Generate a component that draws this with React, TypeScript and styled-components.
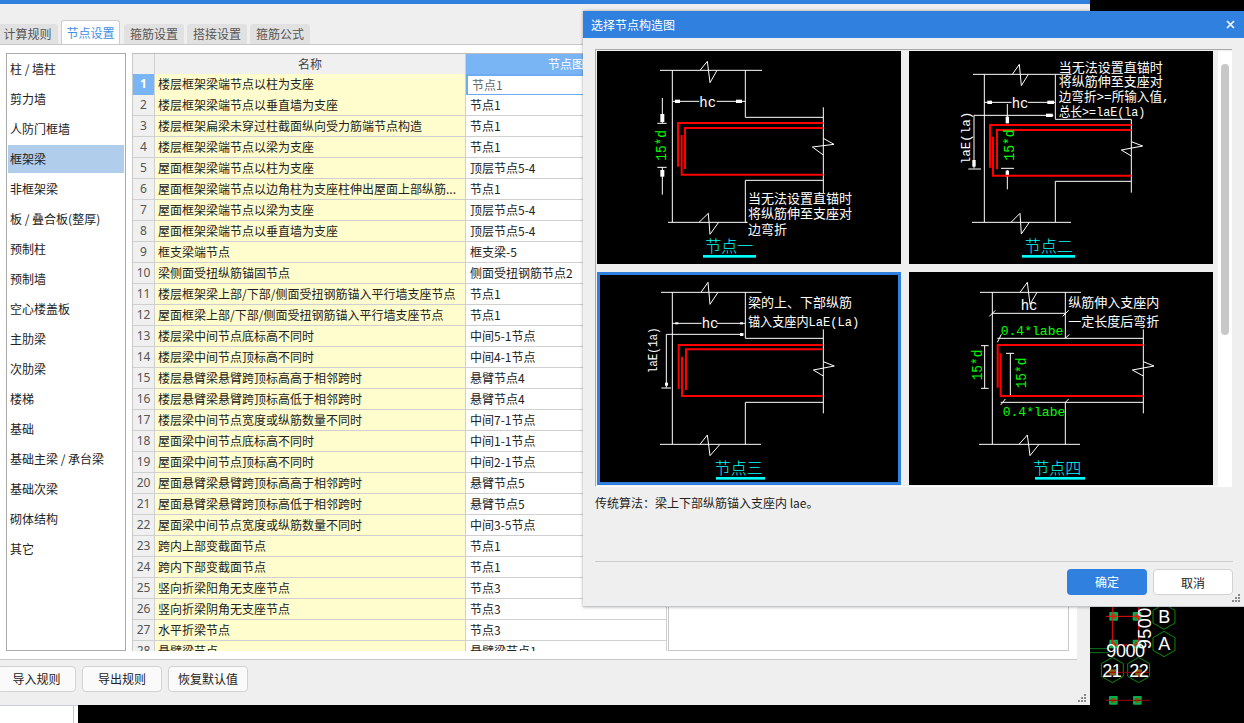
import React from "react";
import styled, { createGlobalStyle } from "styled-components";

const Global = createGlobalStyle`
  html, body { margin: 0; padding: 0; background: #000; overflow: hidden; }
  * { box-sizing: border-box; }
  body { font-family: "Noto Sans CJK SC", "Noto Sans", sans-serif; font-size: 12px; color: #222; }
`;

const Desktop = styled.div`
  position: relative;
  width: 1244px;
  height: 723px;
  background: #000;
  overflow: hidden;
`;

const AppWindow = styled.div`
  width: 1090px;
  height: 705px;
  display: flex;
  flex-direction: column;
  background: #efefef;
  border-top: 4px solid #2f80df;
  padding-top: 16px;
  position: relative;
`;

const TabBar = styled.div`
  display: flex;
  align-items: flex-end;
  height: 24px;
  margin-left: -3px;
  gap: 3px;
  width: 1080px;
`;

const Tab = styled.div<{ $active?: boolean; $wide?: number }>`
  width: ${(p) => p.$wide ?? 60}px;
  height: ${(p) => (p.$active ? 24 : 20)}px;
  line-height: ${(p) => (p.$active ? 23 : 19)}px;
  text-align: center;
  border-radius: 3px 3px 0 0;
  background: ${(p) => (p.$active ? "#fff" : "#e1e1e1")};
  color: ${(p) => (p.$active ? "#3d8fe6" : "#555")};
  border: ${(p) => (p.$active ? "1px solid #ccc" : "none")};
  border-bottom: none;
  margin-right: ${(p) => (p.$active ? 1 : 0)}px;
`;

const Panel = styled.div`
  width: 1077px;
  height: 616px;
  background: #fff;
  border-top: 1px solid #c8c8c8;
  border-bottom: 1px solid #c8c8c8;
  padding: 8px 0 0 6px;
  display: flex;
  align-items: flex-start;
`;

const SideList = styled.div`
  width: 120px;
  height: 598px;
  border: 1px solid #aaa;
  padding: 1px 1px;
  flex: none;
`;

const SideItem = styled.div<{ $active?: boolean }>`
  height: 28px;
  line-height: 28px;
  margin-bottom: 2px;
  padding-left: 2px;
  color: #222;
  background: ${(p) => (p.$active ? "#b1cdec" : "transparent")};
`;

const Table = styled.div`
  width: 535px;
  height: 598px;
  margin-left: 6px;
  overflow: hidden;
  flex: none;
  border-top: 1px solid #bbb;
  border-left: 1px solid #c8c8c8;
`;

const Row = styled.div<{ $head?: boolean }>`
  display: grid;
  grid-template-columns: 22px 311px 201px;
  height: ${(p) => (p.$head ? 20 : 21)}px;
`;

const HeadCell = styled.div<{ $active?: boolean }>`
  background: ${(p) => (p.$active ? "#79b4f5" : "#f0f0f0")};
  color: ${(p) => (p.$active ? "#fff" : "#444")};
  text-align: center;
  line-height: 20px;
  border-right: 1px solid #d0d0d0;
  border-bottom: 1px solid #d0d0d0;
`;

const NumCell = styled.div<{ $active?: boolean }>`
  background: ${(p) => (p.$active ? "#79b4f5" : "#f0f0f0")};
  color: ${(p) => (p.$active ? "#fff" : "#555")};
  font-weight: ${(p) => (p.$active ? 700 : 400)};
  font-family: "Noto Sans", sans-serif;
  text-align: center;
  line-height: 20px;
  border-right: 1px solid #d0d0d0;
  border-bottom: 1px solid #d0d0d0;
`;

const NameCell = styled.div`
  background: #fffdcd;
  padding-left: 3px;
  line-height: 20px;
  white-space: nowrap;
  overflow: hidden;
  color: #222;
  border-right: 1px solid #d0d0d0;
  border-bottom: 1px solid #d0d0d0;
`;

const ValueCell = styled.div<{ $active?: boolean }>`
  background: #fff;
  padding-left: 4px;
  line-height: ${(p) => (p.$active ? 18 : 20)}px;
  color: ${(p) => (p.$active ? "#666" : "#222")};
  border: ${(p) => (p.$active ? "2px solid #6fabf0" : "none")};
  border-right: ${(p) => (p.$active ? "2px solid #6fabf0" : "1px solid #d0d0d0")};
  border-bottom: ${(p) => (p.$active ? "2px solid #6fabf0" : "1px solid #d0d0d0")};
`;

const DetailPane = styled.div`
  width: 401px;
  height: 598px;
  margin-left: 1px;
  border: 1px solid #c8c8c8;
  flex: none;
`;

const Footer = styled.div`
  display: flex;
  gap: 6px;
  margin-left: -3px;
  padding-top: 6px;
`;

const FootButton = styled.div<{ $w: number }>`
  width: ${(p) => p.$w}px;
  height: 26px;
  line-height: 24px;
  text-align: center;
  background: #fafafa;
  border: 1px solid #d2d2d2;
  border-radius: 4px;
  color: #222;
`;

const GripBox = styled.svg<{ $r: number; $b: number }>`
  position: absolute;
  right: ${(p) => p.$r}px;
  bottom: ${(p) => p.$b}px;
  width: 9px;
  height: 9px;
`;

const BottomStrip = styled.div`
  width: 78px;
  height: 18px;
  background: #fff;
  border-top: 1px solid #c8d0dc;
  display: flex;
`;

const StripCell = styled.div`
  width: 74px;
  border-right: 1px solid #c8c8c8;
`;

const CanvasCorner = styled.svg`
  position: absolute;
  left: 1090px;
  top: 607px;
  width: 154px;
  height: 116px;
`;

const Dialog = styled.div`
  position: absolute;
  left: 583px;
  top: 11px;
  width: 661px;
  height: 596px;
  background: #efefef;
  border-bottom: 1px solid #c4c8cf;
  box-shadow: 0 0 3px rgba(0, 0, 0, 0.35);
  display: flex;
  flex-direction: column;
`;

const TitleBar = styled.div`
  height: 27px;
  flex: none;
  background: #2f80df;
  color: #fff;
  display: flex;
  align-items: center;
  justify-content: space-between;
  padding: 0 9px 0 8px;
  line-height: 26px;
`;

const CloseIcon = styled.svg`
  width: 9px;
  height: 9px;
`;

const Body = styled.div`
  flex: 1;
  padding: 11px 12px 0;
  display: flex;
  flex-direction: column;
`;

const Gallery = styled.div`
  width: 637px;
  height: 438px;
  flex: none;
  display: flex;
  border-top: 1px solid #aaa;
  border-left: 1px solid #aaa;
  padding: 1px 0 0 1px;
  border-bottom: 1px solid #fff;
  overflow: hidden;
`;

const Thumbs = styled.div`
  display: grid;
  grid-template-columns: 304px 304px;
  grid-auto-rows: 213px;
  gap: 8px;
  width: 621px;
  flex: none;
`;

const Thumb = styled.div<{ $selected?: boolean }>`
  position: relative;
  width: 304px;
  height: 213px;
  background: #000;
  outline: ${(p) => (p.$selected ? "3px solid #2f80df" : "none")};
  outline-offset: -3px;
`;

const ThumbSvg = styled.svg`
  display: block;
  width: 304px;
  height: 213px;
`;

const Track = styled.div`
  width: 14px;
  height: 100%;
  background: #fff;
  padding: 13px 3px 0;
  flex: none;
`;

const TrackThumb = styled.div`
  width: 8px;
  height: 271px;
  background: #c8c8c8;
  border-radius: 4px;
`;

const Note = styled.div`
  margin-top: 7px;
  height: 18px;
  line-height: 18px;
  color: #222;
`;

const DialogFoot = styled.div`
  margin-top: 49px;
  width: 638px;
  border-top: 1px solid #ccc;
  padding-top: 7px;
  display: flex;
  justify-content: flex-end;
  gap: 6px;
`;

const DialogButton = styled.div<{ $primary?: boolean }>`
  width: 80px;
  height: 26px;
  line-height: 25px;
  text-align: center;
  border-radius: 4px;
  background: ${(p) => (p.$primary ? "#2f80df" : "#fff")};
  color: ${(p) => (p.$primary ? "#fff" : "#222")};
  border: ${(p) => (p.$primary ? "none" : "1px solid #d2d2d2")};
`;

/* CAD drawing parts; coordinates are in 1/3 pixel units */
const Wire = styled.polyline`
  fill: none;
  stroke: #fff;
  stroke-width: 3;
`;
const Rebar = styled.polyline`
  fill: none;
  stroke: #f00;
  stroke-width: 6;
`;
const Block = styled.rect`
  fill: #fff;
`;
const CadText = styled.text<{ $c?: string; $s?: number }>`
  font-family: "Liberation Mono", "Noto Sans CJK SC", monospace;
  font-size: ${(p) => p.$s ?? 39}px;
  fill: ${(p) => p.$c ?? "#fff"};
`;
const CadLatin = styled.text<{ $c?: string; $s?: number }>`
  font-family: "Liberation Mono", "Noto Sans CJK SC", monospace;
  font-size: ${(p) => p.$s ?? 38}px;
  fill: ${(p) => p.$c ?? "#fff"};
`;
const NodeTitle = styled.text`
  font-family: "Noto Sans CJK SC", sans-serif;
  font-size: 48px;
  font-weight: 300;
  fill: #0ff;
`;
const NodeUnder = styled.rect`
  fill: #0ff;
`;

const Wires = ({ list }: { list: string[] }) => (
  <>
    {list.map((p, i) => (
      <Wire key={i} points={p} />
    ))}
  </>
);
const Bars = ({ list }: { list: string[] }) => (
  <>
    {list.map((p, i) => (
      <Rebar key={i} points={p} />
    ))}
  </>
);
const Blocks = ({ list }: { list: number[][] }) => (
  <>
    {list.map(([x, y, w, h], i) => (
      <Block key={i} x={x} y={y} width={w} height={h} />
    ))}
  </>
);
const Vert = ({ x, y, len, c, s, t }: { x: number; y: number; len: number; c?: string; s?: number; t: string }) => (
  <CadLatin $c={c} $s={s} x={x} y={y} textLength={len} lengthAdjust="spacingAndGlyphs" transform={`rotate(-90 ${x} ${y})`}>
    {t}
  </CadLatin>
);

const DrawingOne = () => (
  <ThumbSvg viewBox="51 153 912 639">
    <Wires
      list={[
        "240,211 546,211",
        "360,211 382,184 390,248 411,211",
        "277,211 277,667",
        "496,211 496,352 730,352",
        "730,322 730,580",
        "730,415 762,433 697,441 730,465",
        "502,667 496,667 496,541 730,541",
        "264,667 502,667",
        "357,667 385,640 390,703 416,667",
        "277,304 358,304",
        "410,304 496,304",
        "247,294 247,370",
        "232,370 260,370",
        "232,502 260,502",
        "247,502 247,584",
      ]}
    />
    <Blocks list={[[285, 299, 15, 10], [468, 299, 18, 10], [241, 342, 12, 24], [241, 510, 12, 20]]} />
    <CadLatin x={358} y={320} $s={42}>hc</CadLatin>
    <Vert x={258} y={482} len={92} c="#0f0" s={42} t="15*d" />
    <Bars
      list={[
        "730,369 294,369 294,500",
        "730,384 315,384 315,507",
        "305,405 305,524 730,524",
      ]}
    />
    <CadText x={504} y={610}>当无法设置直锚时</CadText>
    <CadText x={504} y={654}>将纵筋伸至支座对</CadText>
    <CadText x={504} y={702}>边弯折</CadText>
    <NodeTitle x={376} y={756}>节点一</NodeTitle>
    <NodeUnder x={369} y={765} width={159} height={8} />
  </ThumbSvg>
);

const DrawingTwo = () => (
  <ThumbSvg viewBox="27 153 912 639">
    <Wires
      list={[
        "219,223 515,223",
        "337,223 358,193 364,257 385,223",
        "253,223 253,667",
        "466,223 466,358 694,358",
        "694,358 694,578",
        "694,425 728,438 664,450 694,468",
        "694,544 466,544 466,667",
        "216,667 513,667",
        "333,667 360,640 364,702 388,667",
        "253,307 335,307",
        "384,307 466,307",
        "322,312 322,368",
        "222,505 222,346 460,346",
        "205,507 243,507",
        "303,505 342,505",
        "322,510 322,568",
      ]}
    />
    <Blocks list={[[262, 302, 14, 10], [442, 302, 20, 10], [438, 341, 20, 10], [317, 350, 10, 20], [217, 480, 10, 20], [317, 512, 10, 18]]} />
    <CadLatin x={335} y={323} $s={42}>hc</CadLatin>
    <Bars
      list={[
        "694,375 270,375 270,503",
        "694,390 291,390 291,508",
        "279,410 279,527 694,527",
      ]}
    />
    <Vert x={342} y={482} len={94} c="#0f0" s={42} t="15*d" />
    <Vert x={211} y={493} len={158} s={40} t="laE(la)" />
    <CadText x={476} y={217}>当无法设置直锚时</CadText>
    <CadText x={476} y={259}>将纵筋伸至支座对</CadText>
    <CadText x={476} y={302} textLength={333} lengthAdjust="spacingAndGlyphs">边弯折&gt;=所输入值,</CadText>
    <CadText x={476} y={347} textLength={260} lengthAdjust="spacingAndGlyphs">总长&gt;=laE(la)</CadText>
    <NodeTitle x={374} y={756}>节点二</NodeTitle>
    <NodeUnder x={366} y={765} width={159} height={8} />
  </ThumbSvg>
);

const DrawingThree = () => (
  <ThumbSvg viewBox="21 21 912 639">
    <Wires
      list={[
        "213,82 515,82",
        "333,82 354,52 360,118 384,82",
        "247,82 247,538",
        "466,82 466,220 700,220",
        "700,193 700,445",
        "700,290 733,303 670,315 700,333",
        "700,412 466,412 466,538",
        "210,538 513,538",
        "330,538 352,510 360,572 390,538",
        "247,175 335,175",
        "380,175 466,175",
        "229,368 229,208 460,208",
        "214,369 243,369",
      ]}
    />
    <Blocks list={[[256, 172, 9, 6], [450, 172, 9, 6], [450, 204, 10, 9], [225, 353, 9, 9]]} />
    <CadLatin x={335} y={190} $s={42}>hc</CadLatin>
    <Bars
      list={[
        "698,240 266,240 266,372",
        "698,253 288,253 288,375",
        "276,275 276,393 698,393",
      ]}
    />
    <Vert x={200} y={325} len={138} s={40} t="laE(1a)" />
    <CadText x={474} y={127}>梁的上、下部纵筋</CadText>
    <CadText x={474} y={183} textLength={334} lengthAdjust="spacingAndGlyphs">锚入支座内LaE(La)</CadText>
    <NodeTitle x={374} y={627}>节点三</NodeTitle>
    <NodeUnder x={378} y={636} width={147} height={8} />
  </ThumbSvg>
);

const DrawingFour = () => (
  <ThumbSvg viewBox="27 21 912 639">
    <Wires
      list={[
        "240,82 543,82",
        "360,82 382,52 390,118 411,82",
        "277,82 277,538",
        "496,82 496,220",
        "268,154 286,136",
        "488,154 506,136",
        "277,145 496,145",
        "292,220 730,220",
        "292,232 304,208",
        "496,220 508,208",
        "730,193 730,445",
        "730,290 762,303 697,315 730,333",
        "302,412 730,412",
        "302,420 316,402",
        "496,412 506,402",
        "496,412 496,538",
        "237,538 540,538",
        "357,538 382,510 390,572 417,538",
        "254,242 254,370",
        "243,242 266,242",
        "243,370 266,370",
        "331,265 331,393",
        "318,265 342,265",
        "322,393 340,393",
      ]}
    />
    <CadLatin x={362} y={134} $s={42}>hc</CadLatin>
    <CadLatin x={302} y={210} $c="#0f0" $s={40} textLength={188} lengthAdjust="spacingAndGlyphs">0.4*labe</CadLatin>
    <CadLatin x={308} y={452} $c="#0f0" $s={40} textLength={188} lengthAdjust="spacingAndGlyphs">0.4*labe</CadLatin>
    <Bars list={["730,240 293,240 293,368", "302,265 302,393 730,393"]} />
    <Vert x={247} y={346} len={92} c="#0f0" s={42} t="15*d" />
    <Vert x={377} y={370} len={92} c="#0f0" s={42} t="15*d" />
    <CadText x={505} y={127}>纵筋伸入支座内</CadText>
    <CadText x={505} y={183}>一定长度后弯折</CadText>
    <NodeTitle x={400} y={627}>节点四</NodeTitle>
    <NodeUnder x={405} y={636} width={150} height={8} />
  </ThumbSvg>
);

const Grip = ({ r, b }: { r: number; b: number }) => (
  <GripBox $r={r} $b={b} viewBox="0 0 9 9">
    <g fill="#8a8a8a">
      <rect x="6" y="0" width="2" height="2" />
      <rect x="3" y="3" width="2" height="2" />
      <rect x="6" y="3" width="2" height="2" />
      <rect x="0" y="6" width="2" height="2" />
      <rect x="3" y="6" width="2" height="2" />
      <rect x="6" y="6" width="2" height="2" />
    </g>
  </GripBox>
);

const hex = (cx: number, cy: number, r: number) =>
  Array.from({ length: 6 }, (_, i) => {
    const a = Math.PI / 6 + (i * Math.PI) / 3;
    return `${cx + r * Math.cos(a)},${cy + r * Math.sin(a)}`;
  }).join(" ");

const CornerText = styled.text`
  font-family: "Liberation Sans", sans-serif;
  font-size: 54px;
  fill: #fff;
`;

const CadCorner = () => (
  <CanvasCorner viewBox="150 141 462 348">
    <g fill="none" strokeWidth={3}>
      <polygon stroke="#0c8a0c" points={hex(372, 170, 38)} />
      <polygon stroke="#0c8a0c" points={hex(372, 252, 38)} />
      <polygon stroke="#0c8a0c" points={hex(217, 330, 38)} />
      <polygon stroke="#0c8a0c" points={hex(296, 330, 38)} />
    </g>
    {[
      [221, 169],
      [291, 169],
      [221, 252],
      [291, 252],
      [220, 421],
      [292, 421],
    ].map(([x, y], i) => (
      <g key={i}>
        <rect x={x - 13} y={y - 13} width={26} height={26} rx={3} fill="#00b050" />
        <rect x={x - 7} y={y - 7} width={14} height={14} fill="#8a5a10" />
      </g>
    ))}
    <rect x={209} y={328} width={20} height={18} fill="#8a5a10" />
    <rect x={286} y={328} width={20} height={18} fill="#8a5a10" />
    <g fill="none" strokeWidth={3}>
      <polyline stroke="#f01010" points="198,169 310,169" />
      <polyline stroke="#f01010" points="217,141 217,255 296,255 296,141" />
      <polyline stroke="#9a0000" points="198,337 330,337" />
      <polyline stroke="#9a0000" points="198,421 330,421" />
      <polyline stroke="#0a7a20" points="150,266 205,266" />
      <polyline stroke="#0a7a20" points="150,278 205,278" />
    </g>
    <CornerText x={355} y={189}>B</CornerText>
    <CornerText x={355} y={271}>A</CornerText>
    <CornerText x={199} y={290} textLength={116}>9000</CornerText>
    <CornerText x={187} y={350} textLength={58}>21</CornerText>
    <CornerText x={268} y={350} textLength={58}>22</CornerText>
    <CornerText x={333} y={268} transform="rotate(-90 333 268)" textLength={125}>9500</CornerText>
  </CanvasCorner>
);

const tabs = ["计算规则", "节点设置", "箍筋设置", "搭接设置", "箍筋公式"];
const side = [
  "柱 / 墙柱",
  "剪力墙",
  "人防门框墙",
  "框架梁",
  "非框架梁",
  "板 / 叠合板(整厚)",
  "预制柱",
  "预制墙",
  "空心楼盖板",
  "主肋梁",
  "次肋梁",
  "楼梯",
  "基础",
  "基础主梁 / 承台梁",
  "基础次梁",
  "砌体结构",
  "其它",
];
const rows: [string, string][] = [
  ["楼层框架梁端节点以柱为支座", "节点1"],
  ["楼层框架梁端节点以垂直墙为支座", "节点1"],
  ["楼层框架扁梁未穿过柱截面纵向受力筋端节点构造", "节点1"],
  ["楼层框架梁端节点以梁为支座", "节点1"],
  ["屋面框架梁端节点以柱为支座", "顶层节点5-4"],
  ["屋面框架梁端节点以边角柱为支座柱伸出屋面上部纵筋...", "节点1"],
  ["屋面框架梁端节点以梁为支座", "顶层节点5-4"],
  ["屋面框架梁端节点以垂直墙为支座", "顶层节点5-4"],
  ["框支梁端节点", "框支梁-5"],
  ["梁侧面受扭纵筋锚固节点", "侧面受扭钢筋节点2"],
  ["楼层框架梁上部/下部/侧面受扭钢筋锚入平行墙支座节点", "节点1"],
  ["屋面框梁上部/下部/侧面受扭钢筋锚入平行墙支座节点", "节点1"],
  ["楼层梁中间节点底标高不同时", "中间5-1节点"],
  ["楼层梁中间节点顶标高不同时", "中间4-1节点"],
  ["楼层悬臂梁悬臂跨顶标高高于相邻跨时", "悬臂节点4"],
  ["楼层悬臂梁悬臂跨顶标高低于相邻跨时", "悬臂节点4"],
  ["楼层梁中间节点宽度或纵筋数量不同时", "中间7-1节点"],
  ["屋面梁中间节点底标高不同时", "中间1-1节点"],
  ["屋面梁中间节点顶标高不同时", "中间2-1节点"],
  ["屋面悬臂梁悬臂跨顶标高高于相邻跨时", "悬臂节点5"],
  ["屋面悬臂梁悬臂跨顶标高低于相邻跨时", "悬臂节点5"],
  ["屋面梁中间节点宽度或纵筋数量不同时", "中间3-5节点"],
  ["跨内上部变截面节点", "节点1"],
  ["跨内下部变截面节点", "节点1"],
  ["竖向折梁阳角无支座节点", "节点3"],
  ["竖向折梁阴角无支座节点", "节点3"],
  ["水平折梁节点", "节点3"],
  ["悬臂梁节点", "悬臂梁节点1"],
];

export default function App() {
  return (
    <Desktop>
      <Global />
      <AppWindow>
        <TabBar>
          {tabs.map((t, i) => (
            <Tab key={t} $active={i === 1} $wide={i === 0 ? 61 : i === 1 ? 59 : 60}>
              {t}
            </Tab>
          ))}
        </TabBar>
        <Panel>
          <SideList>
            {side.map((s) => (
              <SideItem key={s} $active={s === "框架梁"}>
                {s}
              </SideItem>
            ))}
          </SideList>
          <Table>
            <Row $head>
              <HeadCell />
              <HeadCell>名称</HeadCell>
              <HeadCell $active>节点图</HeadCell>
            </Row>
            {rows.map(([n, v], i) => (
              <Row key={i}>
                <NumCell $active={i === 0}>{i + 1}</NumCell>
                <NameCell>{n}</NameCell>
                <ValueCell $active={i === 0}>{v}</ValueCell>
              </Row>
            ))}
          </Table>
          <DetailPane />
        </Panel>
        <Footer>
          <FootButton $w={79}>导入规则</FootButton>
          <FootButton $w={80}>导出规则</FootButton>
          <FootButton $w={80}>恢复默认值</FootButton>
        </Footer>
        <Grip r={3} b={2} />
      </AppWindow>
      <BottomStrip>
        <StripCell />
      </BottomStrip>
      <CadCorner />
      <Dialog>
        <TitleBar>
          选择节点构造图
          <CloseIcon viewBox="0 0 9 9">
            <path d="M1 1 L8 8 M8 1 L1 8" stroke="#fff" strokeWidth="1.6" fill="none" />
          </CloseIcon>
        </TitleBar>
        <Body>
          <Gallery>
            <Thumbs>
              <Thumb>
                <DrawingOne />
              </Thumb>
              <Thumb>
                <DrawingTwo />
              </Thumb>
              <Thumb $selected>
                <DrawingThree />
              </Thumb>
              <Thumb>
                <DrawingFour />
              </Thumb>
            </Thumbs>
            <Track>
              <TrackThumb />
            </Track>
          </Gallery>
          <Note>传统算法：梁上下部纵筋锚入支座内 lae。</Note>
          <DialogFoot>
            <DialogButton $primary>确定</DialogButton>
            <DialogButton>取消</DialogButton>
          </DialogFoot>
        </Body>
        <Grip r={3} b={3} />
      </Dialog>
    </Desktop>
  );
}
